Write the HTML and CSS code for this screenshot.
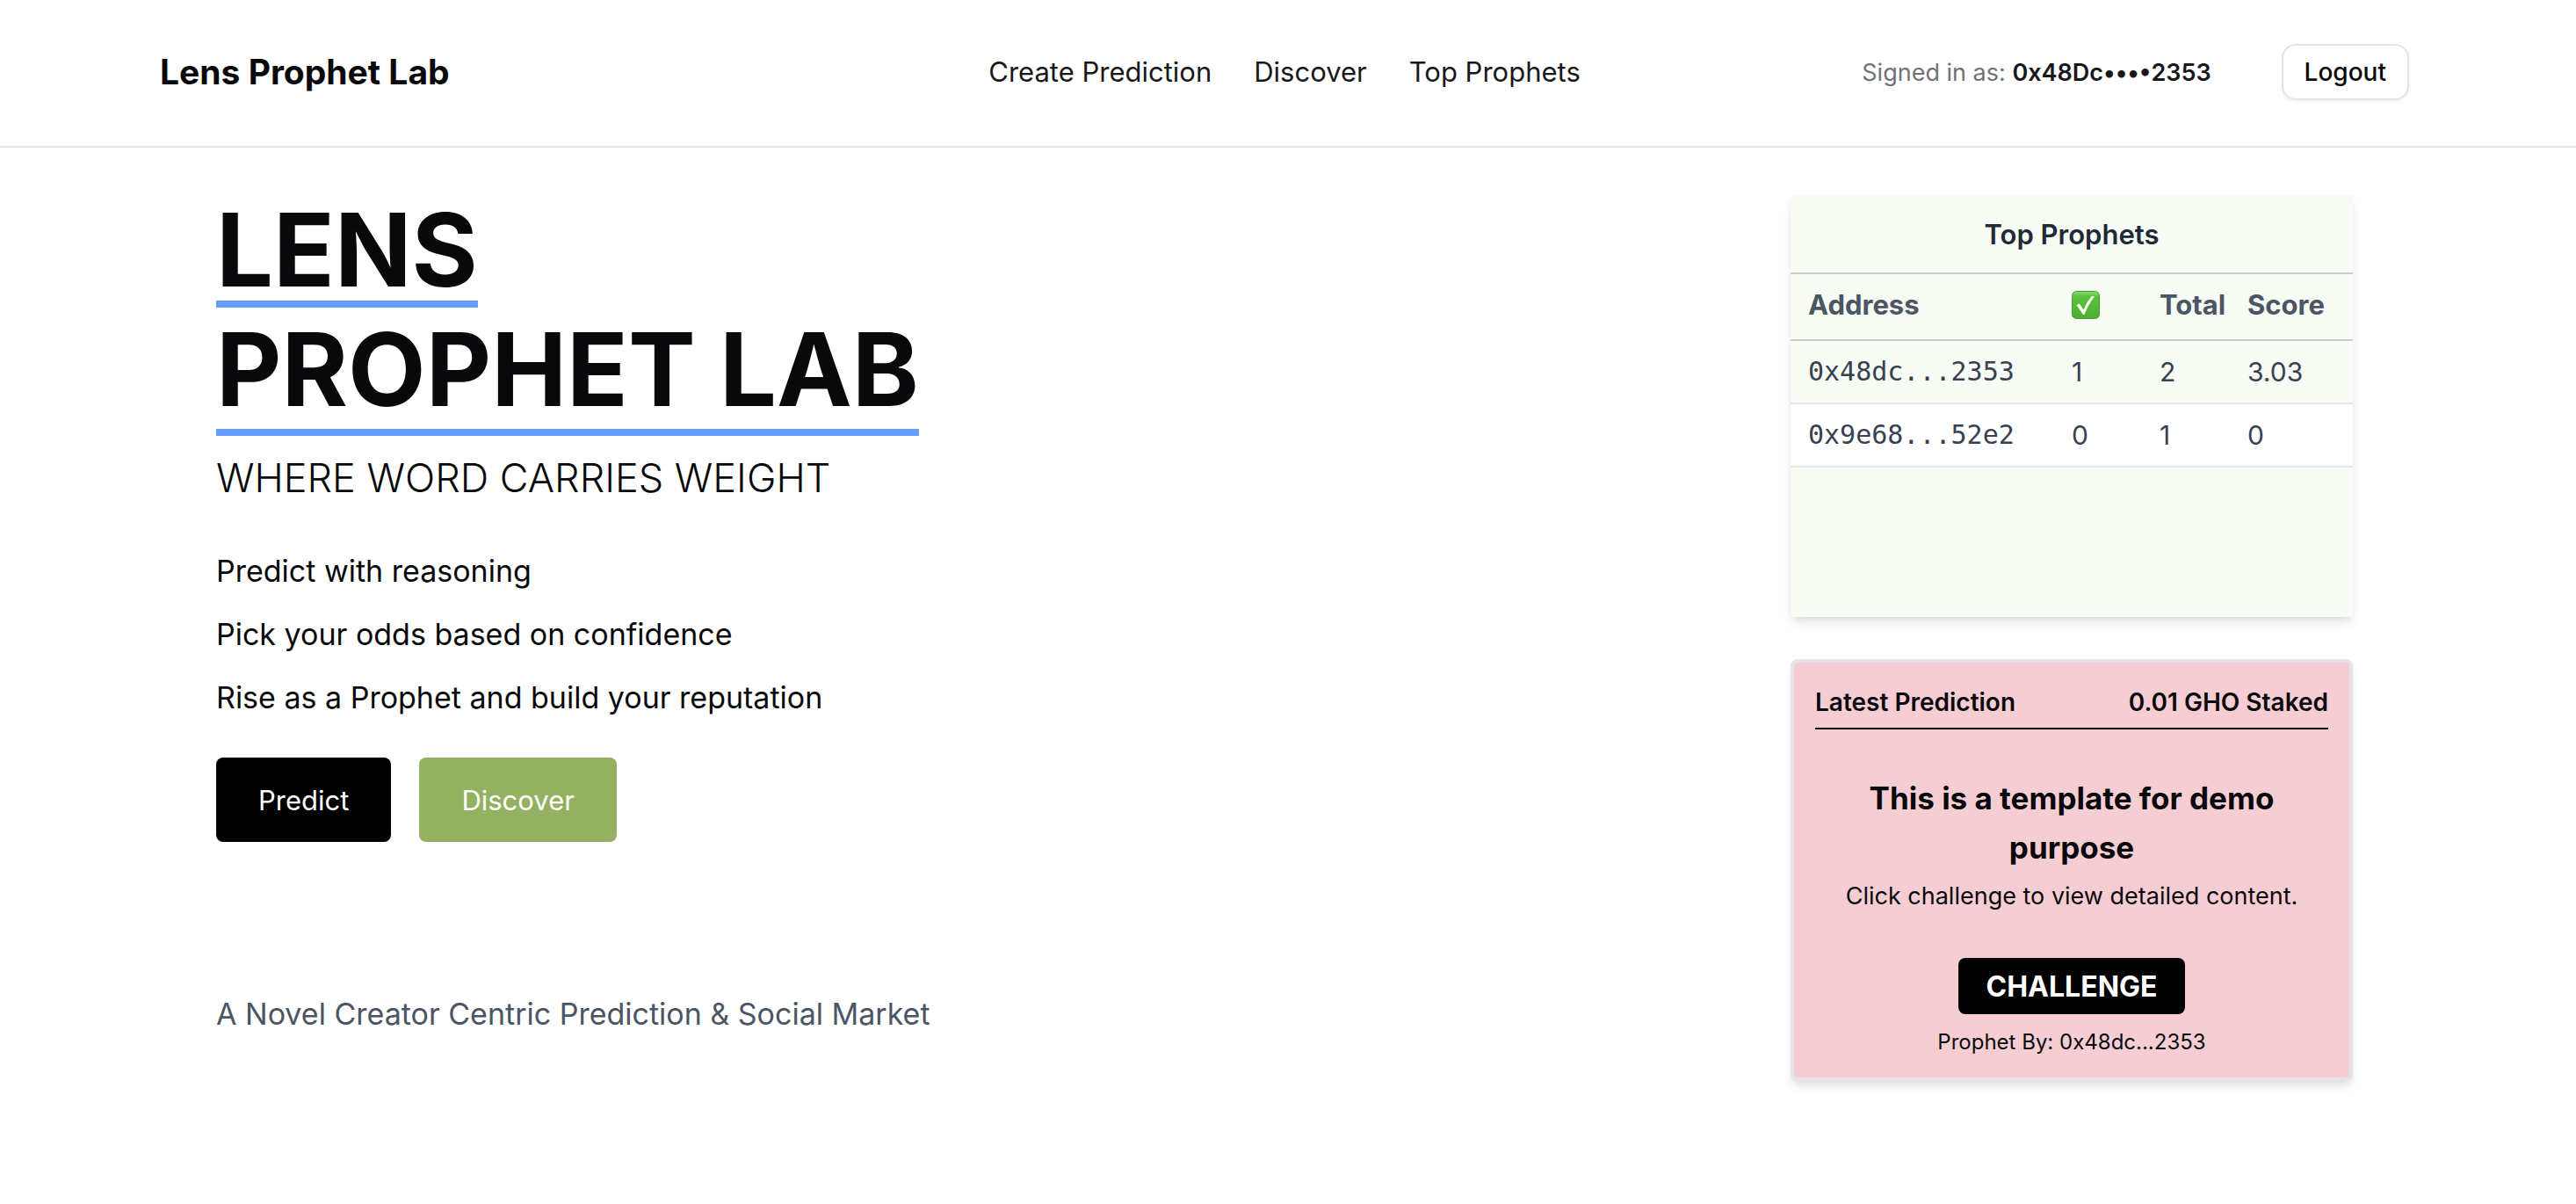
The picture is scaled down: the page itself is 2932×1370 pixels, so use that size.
FILE: index.html
```html
<!DOCTYPE html>
<html lang="en">
<head>
  <meta charset="utf-8">
  <meta name="viewport" content="width=device-width, initial-scale=1">
  <title>Lens Prophet Lab</title>
  <link rel="stylesheet" href="styles.css">
</head>
<body>
  <header class="site-header">
    <div class="container header-row">
      <a class="brand" href="#">Lens Prophet Lab</a>
      <nav class="nav">
        <a href="#create">Create Prediction</a>
        <a href="#discover">Discover</a>
        <a href="#prophets">Top Prophets</a>
      </nav>
      <div class="account">
        <p class="signed-in">Signed in as: <strong>0x48Dc••••2353</strong></p>
        <button class="logout" type="button">Logout</button>
      </div>
    </div>
  </header>

  <main class="page">
    <div class="container content">
      <section class="hero">
        <h1 class="title">
          <span class="title-line">LENS</span>
          <span class="title-line title-line-last">PROPHET LAB</span>
        </h1>
        <p class="subtitle">WHERE WORD CARRIES WEIGHT</p>
        <ul class="points">
          <li>Predict with reasoning</li>
          <li>Pick your odds based on confidence</li>
          <li>Rise as a Prophet and build your reputation</li>
        </ul>
        <div class="actions">
          <button class="action action-predict" type="button">Predict</button>
          <button class="action action-discover" type="button">Discover</button>
        </div>
        <p class="tagline">A Novel Creator Centric Prediction &amp; Social Market</p>
      </section>

      <aside class="sidebar">
        <section class="prophets" id="prophets">
          <h2 class="prophets-title">Top Prophets</h2>
          <table class="prophets-table">
            <thead>
              <tr>
                <th class="col-address" scope="col">Address</th>
                <th class="col-count" scope="col">
                  <svg class="check" viewBox="0 0 32 32" role="img" aria-label="Correct">
                    <defs>
                      <linearGradient id="check-fill" x1="0" y1="0" x2="0" y2="1">
                        <stop offset="0" stop-color="#8fdc7c"/>
                        <stop offset="0.18" stop-color="#5ac43e"/>
                        <stop offset="1" stop-color="#4fae31"/>
                      </linearGradient>
                    </defs>
                    <rect x="0.5" y="0.5" width="31" height="31" rx="5" fill="url(#check-fill)" stroke="#469c35"/>
                    <path d="M5.500 16 8.800 14.600 13.400 21.400Q17 12.600 22.600 6L26 6.200Q18.400 16 14.400 27L13 27Z" fill="#fff"/>
                  </svg>
                </th>
                <th class="col-count" scope="col">Total</th>
                <th scope="col">Score</th>
              </tr>
            </thead>
            <tbody>
              <tr><td class="address">0x48dc...2353</td><td>1</td><td>2</td><td>3.03</td></tr>
              <tr><td class="address">0x9e68...52e2</td><td>0</td><td>1</td><td>0</td></tr>
            </tbody>
          </table>
        </section>

        <section class="prediction">
          <div class="prediction-head">
            <span>Latest Prediction</span>
            <span>0.01 GHO Staked</span>
          </div>
          <h2 class="prediction-title">This is a template for demo purpose</h2>
          <p class="prediction-text">Click challenge to view detailed content.</p>
          <button class="challenge" type="button">CHALLENGE</button>
          <p class="prediction-by">Prophet By: 0x48dc...2353</p>
        </section>
      </aside>
    </div>
  </main>
</body>
</html>
```
FILE: styles.css
```css
*,
*::before,
*::after {
  box-sizing: border-box;
}

body {
  margin: 0;
  background: #fff;
  color: #09090b;
  font-family: Inter, "Liberation Sans", sans-serif;
  font-size: 31px;
}

h1,
h2,
p,
ul {
  margin: 0;
  padding: 0;
}

a {
  color: inherit;
  text-decoration: none;
}

button {
  border: 0;
  font-family: inherit;
  cursor: pointer;
}

.container {
  max-width: 2560px;
  margin: 0 auto;
}

/* Header */

.site-header {
  padding: 50px 8px 52px 0;
  border-bottom: 2px solid #e4e4e4;
}

.header-row {
  display: grid;
  grid-template-columns: 1fr auto 1fr;
  align-items: center;
}

.brand {
  font-size: 39px;
  line-height: 56px;
  font-weight: 700;
}

.nav {
  display: flex;
  gap: 48px;
  color: #18181b;
  font-size: 31px;
  line-height: 48px;
}

.account {
  display: flex;
  align-items: center;
  justify-content: flex-end;
  gap: 80px;
  font-size: 27px;
}

.signed-in {
  color: #71717a;
}

.signed-in strong {
  color: #18181b;
  font-weight: 600;
}

.logout {
  height: 64px;
  padding: 0 24px;
  border: 2px solid #e4e4e4;
  border-radius: 16px;
  background: #fff;
  box-shadow: 0 2px 4px rgba(0, 0, 0, 0.05);
  color: #09090b;
  font-size: 28px;
  font-weight: 500;
}

/* Page body */

.page {
  padding: 54px 8px 140px 0;
}

.content {
  display: flex;
  justify-content: space-between;
  padding: 0 64px;
}

.hero {
  padding-top: 6px;
}

.title {
  display: flex;
  flex-direction: column;
  align-items: flex-start;
  gap: 14px;
  font-size: 115px;
  line-height: 114px;
  font-weight: 700;
}

.title-line {
  border-bottom: 8px solid #659efd;
}

.title-line-last {
  padding-bottom: 10px;
}

.subtitle {
  margin: 16px 0 38px;
  font-size: 45px;
  line-height: 64px;
  font-weight: 300;
}

.points {
  list-style: none;
  font-size: 34px;
  line-height: 72px;
}

.actions {
  display: flex;
  gap: 32px;
  margin-top: 32px;
}

.action {
  height: 96px;
  padding: 0 48px;
  border-radius: 8px;
  color: #fff;
  font-size: 31px;
}

.action-predict {
  background: #000;
}

.action-discover {
  background: #93b160;
}

.tagline {
  margin-top: 168px;
  color: #4b5563;
  font-size: 34px;
  line-height: 56px;
}

/* Sidebar cards */

.sidebar {
  display: grid;
  flex: 0 0 640px;
  grid-auto-rows: 480px;
  gap: 48px;
}

.prophets {
  background: #f7fcf5;
  box-shadow: 0 8px 12px -2px rgba(0, 0, 0, 0.1), 0 4px 8px -4px rgba(0, 0, 0, 0.1);
}

.prophets-title {
  padding: 17px 0 15px;
  border-bottom: 2px solid #c9cbc8;
  color: #1f2937;
  font-size: 31px;
  line-height: 56px;
  font-weight: 600;
  text-align: center;
}

.prophets-table {
  width: 100%;
  border-collapse: separate;
  border-spacing: 0;
  table-layout: fixed;
  color: #374151;
  font-size: 30px;
  line-height: 40px;
  text-align: left;
}

.prophets-table th {
  height: 76px;
  padding: 0 20px 5px;
  border-bottom: 2px solid #c9cbc8;
  color: #4b5563;
  font-size: 31px;
  font-weight: 700;
}

.prophets-table td {
  height: 72px;
  padding: 0 20px;
  border-bottom: 2px solid #e5e7eb;
}

.prophets-table tbody tr:nth-child(even) {
  background: #fff;
}

.col-address {
  width: 300px;
}

.col-count {
  width: 100px;
}

.prophets-table .address {
  font-family: "DejaVu Sans Mono", monospace;
}

.check {
  display: block;
  width: 32px;
  height: 32px;
}

.prediction {
  display: flex;
  flex-direction: column;
  align-items: center;
  padding: 24px 24px 16px;
  border: 4px solid #e4e4e7;
  border-radius: 8px;
  background: #f6cdd3;
  box-shadow: 0 8px 12px -2px rgba(0, 0, 0, 0.1), 0 4px 8px -4px rgba(0, 0, 0, 0.1);
  text-align: center;
}

.prediction-head {
  display: flex;
  align-self: stretch;
  justify-content: space-between;
  padding-bottom: 8px;
  border-bottom: 2px solid #000;
  font-size: 28px;
  line-height: 42px;
  font-weight: 600;
}

.prediction-title {
  margin-top: 50px;
  padding: 0 48px;
  font-size: 35px;
  line-height: 56px;
  font-weight: 700;
}

.prediction-text {
  font-size: 27px;
  line-height: 56px;
}

.challenge {
  flex: none;
  height: 64px;
  margin-top: 42px;
  padding: 0 32px;
  border-radius: 8px;
  background: #000;
  color: #fff;
  font-size: 32px;
  font-weight: 700;
}

.prediction-by {
  margin-top: 16px;
  font-size: 24px;
  line-height: 32px;
}
```
